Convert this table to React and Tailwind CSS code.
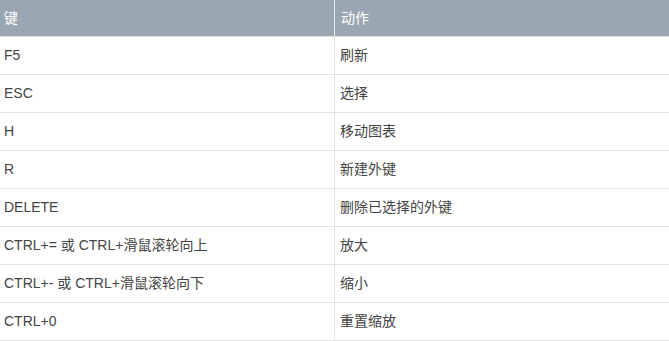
import React from "react";

const rows = [
  ["F5", "刷新"],
  ["ESC", "选择"],
  ["H", "移动图表"],
  ["R", "新建外键"],
  ["DELETE", "删除已选择的外键"],
  ["CTRL+= 或 CTRL+滑鼠滚轮向上", "放大"],
  ["CTRL+- 或 CTRL+滑鼠滚轮向下", "缩小"],
  ["CTRL+0", "重置缩放"],
];

export default function App() {
  return (
    <div
      className="w-[669px] h-[341px] bg-white text-[14px] text-[#444]"
      style={{ fontFamily: '"Liberation Sans", Arial, "Noto Sans CJK SC", sans-serif' }}
    >
      <div className="grid grid-cols-[335px_1fr] h-[37px] bg-[#9aa6b2] text-white border-b border-[#dddddd]">
        <div className="flex items-center pl-[4px] border-r border-[#e8ecef]">键</div>
        <div className="flex items-center pl-[6px]">动作</div>
      </div>
      {rows.map(([k, a]) => (
        <div key={k} className="grid grid-cols-[335px_1fr] h-[38px] border-b border-[#e2e2e2]">
          <div className="flex items-center pl-[4px] border-r border-[#e2e2e2]">{k}</div>
          <div className="flex items-center pl-[5px]">{a}</div>
        </div>
      ))}
    </div>
  );
}
